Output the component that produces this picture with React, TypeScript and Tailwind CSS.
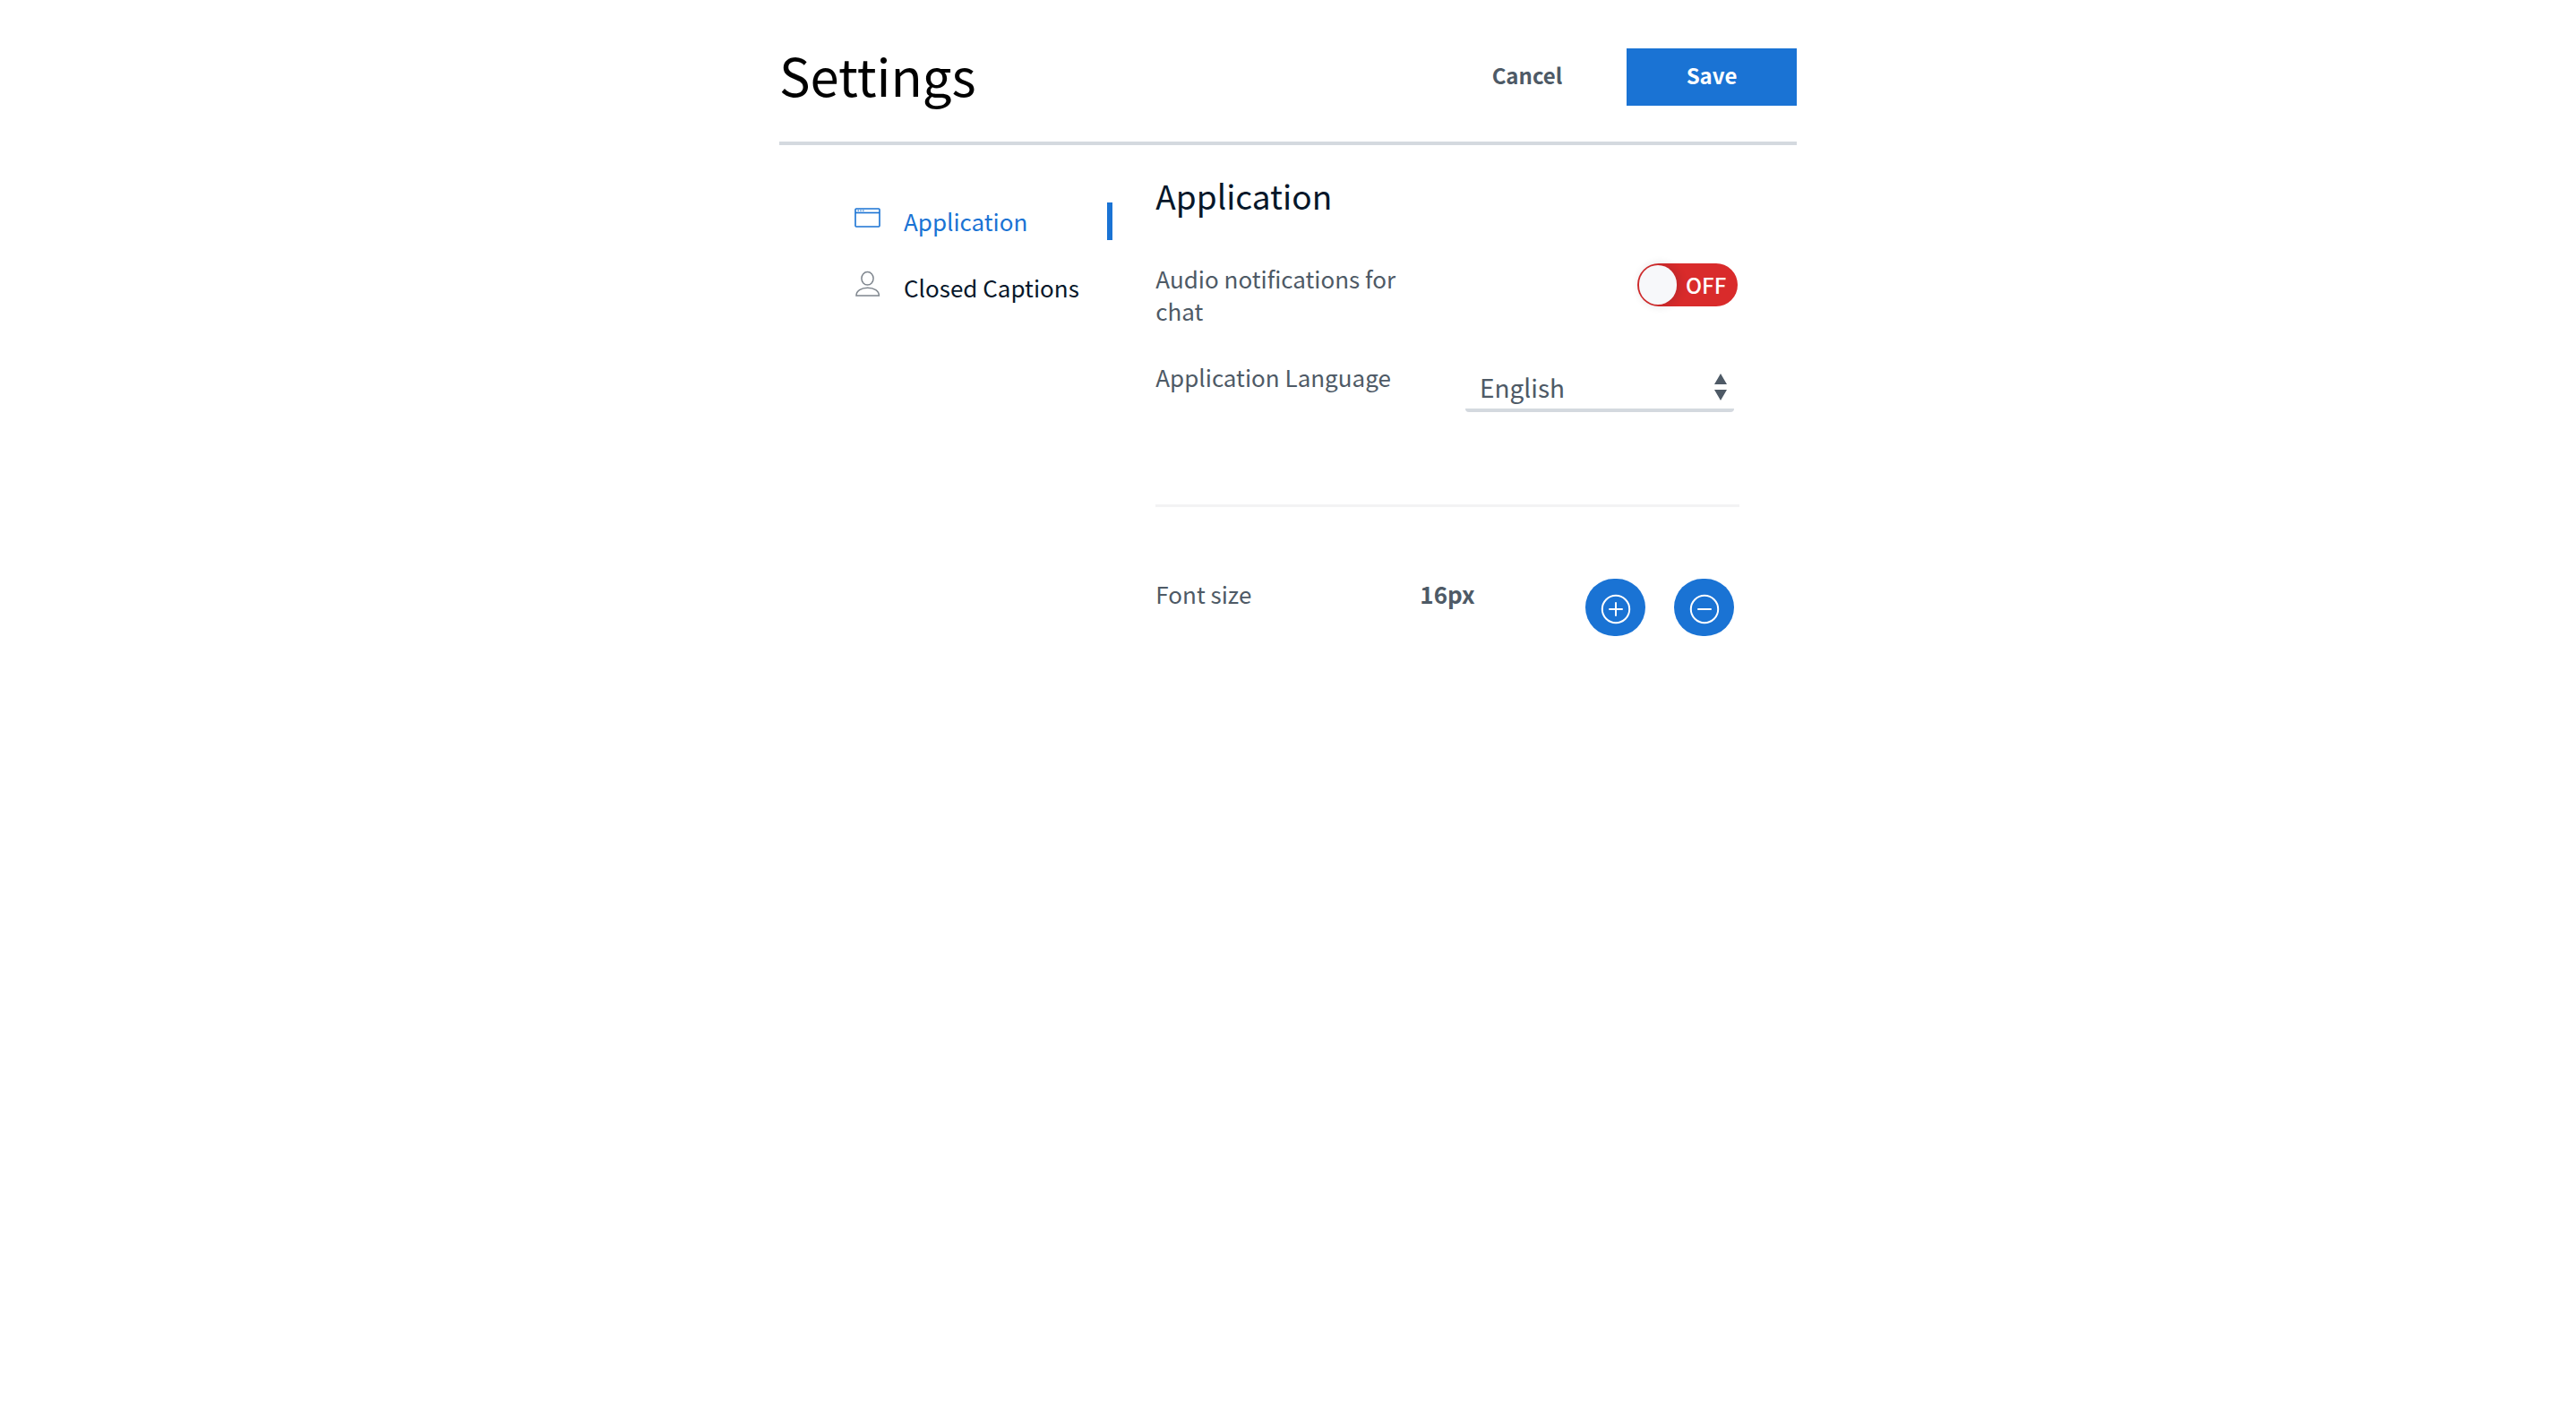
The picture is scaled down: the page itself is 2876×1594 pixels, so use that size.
import { useState } from 'react';

function WindowIcon() {
  return (
    <svg viewBox="0 0 30 30" className="mb-2 size-[30px] shrink-0" fill="none" stroke="currentColor" strokeWidth="1.6" aria-hidden="true">
      <rect x="1" y="5" width="27" height="20" rx="1" />
      <path d="M1 9.5h27" />
      <path d="M3.5 7.2h1.4M6.3 7.2h1.4M9.1 7.2h1.4" strokeWidth="1.2" />
    </svg>
  );
}

function UserIcon() {
  return (
    <svg viewBox="0 0 30 30" className="mb-2 size-[30px] shrink-0 text-[#7f868e]" fill="none" stroke="currentColor" strokeWidth="1.5" aria-hidden="true">
      <ellipse cx="14.5" cy="8.8" rx="6.6" ry="7.2" />
      <path d="M2 28h25.4c0-5-5.4-8.8-12.7-8.8S2 23 2 28Z" />
    </svg>
  );
}

function RoundIcon({ plus = false }: { plus?: boolean }) {
  return (
    <svg viewBox="0 0 34 34" className="mt-1 size-[34px]" fill="none" stroke="currentColor" strokeWidth="2" strokeLinecap="round" aria-hidden="true">
      <circle cx="17" cy="17" r="15.2" />
      <path d={plus ? 'M10 17h14M17 10v14' : 'M10 17h14'} />
    </svg>
  );
}

const languages = ['English', 'Deutsch', 'Español', 'Français', 'Português'];

export default function App() {
  const [audio, setAudio] = useState(false);
  const [language, setLanguage] = useState('English');
  const [size, setSize] = useState(16);

  return (
    <div className="min-h-screen bg-white font-['Noto_Sans_CJK_SC','Noto_Sans',sans-serif] text-[26px] leading-9 text-[#4e5a66]">
      <div className="mx-auto w-full max-w-[1136px]">
        <header className="flex items-start border-b-4 border-[#d4d9df] pt-[54px] pb-10">
          <h1 className="text-[58px] leading-[58px] text-black">Settings</h1>
          <div className="ml-auto flex gap-4 text-2xl font-bold">
            <button type="button" className="h-16 w-[190px] pb-1">Cancel</button>
            <button type="button" className="h-16 w-[190px] bg-[#1a73d4] pb-1 text-white">Save</button>
          </div>
        </header>

        <div className="grid grid-cols-[37%_1fr]">
          <nav className="flex flex-col gap-8 pt-16 pr-12 pl-[84px] text-[#06172a]">
            <a href="#application" aria-current="page" className="flex h-[42px] items-center gap-[25px] border-r-6 border-[#1a73d4] whitespace-nowrap text-[#1a73d4]">
              <WindowIcon />
              Application
            </a>
            <a href="#captions" className="flex h-[42px] items-center gap-[25px] whitespace-nowrap">
              <UserIcon />
              Closed Captions
            </a>
          </nav>

          <main className="pt-[34px] pr-16">
            <h2 className="text-[37px] leading-11 text-[#06172a]">Application</h2>

            <div className="mt-[53px] flex items-start justify-between pr-0.5">
              <label htmlFor="audio" className="w-[280px]">Audio notifications for chat</label>
              <label className="mt-px flex h-12 w-28 cursor-pointer items-center rounded-full bg-[#d92b2b] text-2xl text-white">
                <input
                  id="audio"
                  type="checkbox"
                  role="switch"
                  checked={audio}
                  onChange={(e) => setAudio(e.target.checked)}
                  className="ml-0.5 h-11 w-[42px] appearance-none rounded-full bg-[#f7f8fa] shadow-[2px_0_10px_2px_rgba(6,23,42,0.12)]"
                />
                <span className="ml-[10px] font-medium">{audio ? 'ON' : 'OFF'}</span>
              </label>
            </div>

            <div className="mt-[38px] flex items-start justify-between pr-1.5">
              <label htmlFor="language">Application Language</label>
              <div className="relative w-[300px]">
                <select
                  id="language"
                  value={language}
                  onChange={(e) => setLanguage(e.target.value)}
                  className="h-[57px] w-full appearance-none rounded-sm border-b-4 border-[#d4d9df] bg-white pt-1 pl-4 text-[28px] leading-[48px]"
                >
                  {languages.map((l) => (
                    <option key={l}>{l}</option>
                  ))}
                </select>
                <svg viewBox="0 0 14 30" className="pointer-events-none absolute top-[14px] right-2 h-[30px] w-[14px]" fill="currentColor" aria-hidden="true">
                  <path d="M7 0l7 12H0zM7 30l7-12H0z" />
                </svg>
              </div>
            </div>

            <hr className="mt-[103px] border-t-3 border-[#f3f3f4]" />

            <div className="mt-[79px] flex items-start pr-1.5">
              <span className="w-[295px]">Font size</span>
              <output className="font-bold">{size}px</output>
              <div className="mt-px ml-auto flex gap-8 text-white">
                <button type="button" aria-label="Increase font size" onClick={() => setSize(size + 1)} className="grid h-16 w-[67px] place-items-center rounded-full bg-[#1a73d4]">
                  <RoundIcon plus />
                </button>
                <button type="button" aria-label="Decrease font size" onClick={() => setSize(size - 1)} className="grid h-16 w-[67px] place-items-center rounded-full bg-[#1a73d4]">
                  <RoundIcon />
                </button>
              </div>
            </div>
          </main>
        </div>
      </div>
    </div>
  );
}
